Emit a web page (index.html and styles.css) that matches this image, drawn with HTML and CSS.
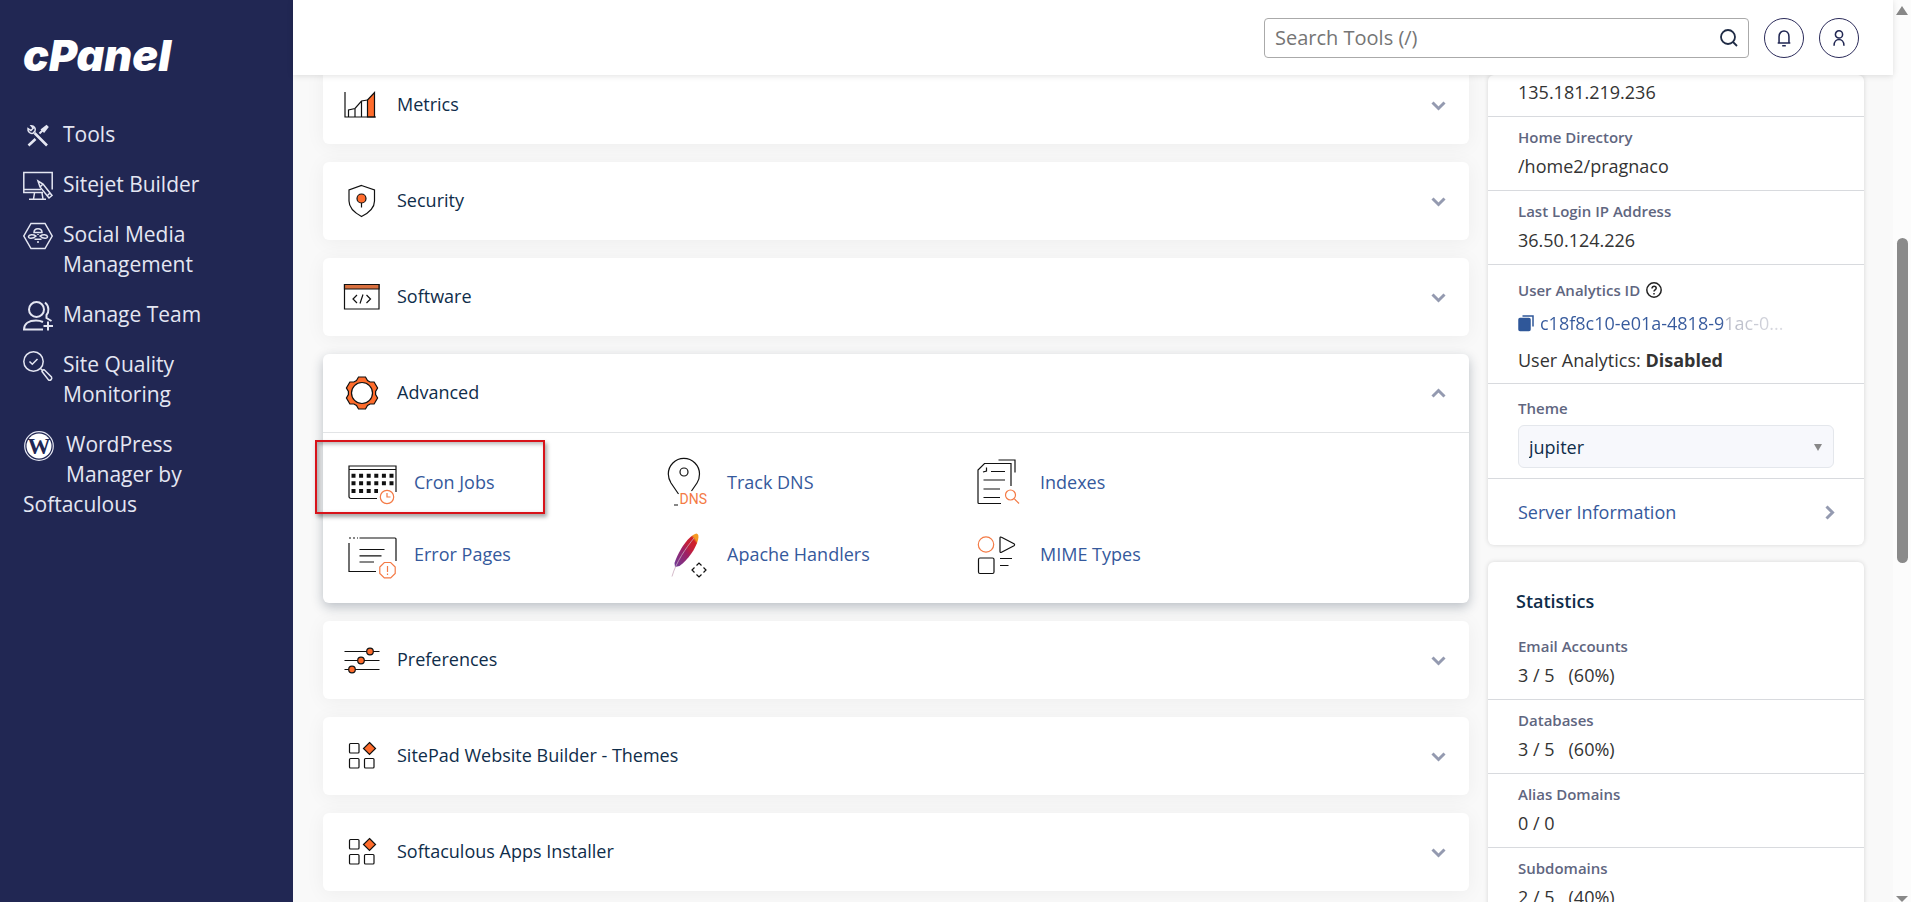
FILE: index.html
```
<!DOCTYPE html>
<html lang="en">
<head>
  <meta charset="UTF-8" />
  <meta name="viewport" content="width=device-width, initial-scale=1.0" />
  <title>cPanel - Tools</title>
  <link rel="stylesheet" href="styles.css">
</head>
<body>
  <nav class="sidebar">
    <a href="#" class="logo">cPanel</a>
    <ul class="nav-list">
      <li>
        <a href="#" class="nav-link">
          <svg class="nav-icon" viewBox="0 0 30 30">
            <path d="M5.5 24.500l7-6.500M11.500 12l12.500 12.500" stroke-width="2.600" />
            <path d="M5 7.500c-.5 3 2 5.500 5 4.800l2-2.200c1-2.800-.8-5.300-3.800-5.300l2 2.500-2.300 2.200z" stroke-width="1.500" />
            <path d="M16.500 12.500l3-3" stroke-width="2" />
            <path d="M19 8.500l4.500-3.500 1 1-3.500 4.500z" fill="#e4e6f2" stroke-width="2" />
          </svg>
          <span>Tools</span>
        </a>
      </li>
      <li>
        <a href="#" class="nav-link">
          <svg class="nav-icon" viewBox="0 0 30 30">
            <path d="M20 21.500H.8V1.500h28.400v17M1 18.500h17M11.500 22l-1 6M19 22l1 6M6 28.300h17" />
            <path d="M15 10l2 6 9 11 3-2.500-9-11.500zM17 16l3-3M24 25l3-3" />
          </svg>
          <span>Sitejet Builder</span>
        </a>
      </li>
      <li>
        <a href="#" class="nav-link">
          <svg class="nav-icon" viewBox="0 0 30 30">
            <path d="M8 2.500h14l7.200 12.500L22 27.500H8L.8 15z" />
            <path d="M11 11.500c0-5 8-5 8 0zM13 15c-3-2-7-1.500-7.500.5s4 3 7.500-.5zM17 15c3-2 7-1.500 7.500.5s-4 3-7.500-.5zM11.500 18.200h7M14 21h2M15 13v1" />
          </svg>
          <span>Social Media Management</span>
        </a>
      </li>
      <li>
        <a href="#" class="nav-link">
          <svg class="nav-icon" viewBox="0 0 30 30">
            <g stroke-width="2">
              <circle cx="13.500" cy="8.500" r="7.500" />
              <path d="M22 1.500c4.500 3.500 4 10 1.500 12.500v3l5 3M20 28.500H1c0-6 5-9 12-9 3 0 5 .5 7 1.500M25 20.500v9M20.500 25H30" />
            </g>
          </svg>
          <span>Manage Team</span>
        </a>
      </li>
      <li>
        <a href="#" class="nav-link">
          <svg class="nav-icon" viewBox="0 0 30 30">
            <circle cx="10.500" cy="10.500" r="9.700" />
            <path d="M6.500 10.500l2.800 2.800L14.500 8M17.500 17.500l2 2" />
            <path d="M19 20.500c.5-1.500 1.500-2 2.500-1.500l7 7c1 2-1 4-3 3z" />
          </svg>
          <span>Site Quality Monitoring</span>
        </a>
      </li>
      <li>
        <a href="#" class="nav-link nav-link-wp">
          <svg class="nav-icon" viewBox="0 0 30 30">
            <circle cx="15" cy="15" r="14.300" stroke-width="1.200" />
            <circle cx="15" cy="15" r="12.500" fill="#fff" stroke="none" />
            <text class="wp-letter" x="15" y="23" text-anchor="middle">W</text>
          </svg>
          WordPress Manager by Softaculous
        </a>
      </li>
    </ul>
  </nav>

  <div class="main">
    <header class="header">
      <form class="search">
        <input type="search" class="search-input" placeholder="Search Tools (/)" aria-label="Search Tools" />
        <svg class="search-icon" viewBox="0 0 20 20">
          <circle cx="9" cy="9" r="7" />
          <path d="M14 14l4 4" />
        </svg>
      </form>
      <button class="round-button" aria-label="Notifications">
        <svg viewBox="0 0 20 20">
          <path d="M3 15.500h14M4.500 15.500V8.500C4.500 0 15.500 0 15.500 8.500v7M8 18.500h4" />
        </svg>
      </button>
      <button class="round-button" aria-label="User menu">
        <svg viewBox="0 0 20 20">
          <circle cx="10" cy="6" r="4" />
          <path d="M4.500 18.500c0-9 11-9 11 0" />
        </svg>
      </button>
    </header>

    <div class="content">
      <div class="tools">
        <section class="card">
          <button class="card-header">
            <svg class="card-icon" viewBox="0 0 36 36">
              <path d="M24.500 13l7-7.500V30h-7z" fill="#ff6c2c" />
              <path d="M2 5v25h31M5.500 30v-7l6.500-1.500 6.500-7.500 6-1M12 21.500V30M18.500 14v16" />
            </svg>
            <span>Metrics</span>
            <svg class="chevron" viewBox="0 0 15 9"><path d="M1.500 1.500l6 6 6-6" /></svg>
          </button>
        </section>

        <section class="card">
          <button class="card-header">
            <svg class="card-icon" viewBox="0 0 36 36">
              <path d="M18.500 2.500L31.500 7v11c0 7-6 12-13 15.500C12 30 6 25 6 18V7z" />
              <circle cx="18.500" cy="15.500" r="4.500" fill="#ff6c2c" />
              <path d="M18.500 20v4.500" />
            </svg>
            <span>Security</span>
            <svg class="chevron" viewBox="0 0 15 9"><path d="M1.500 1.500l6 6 6-6" /></svg>
          </button>
        </section>

        <section class="card">
          <button class="card-header">
            <svg class="card-icon" viewBox="0 0 36 36">
              <path d="M1.500 5.500h34.500v24.500H1.500z" />
              <path d="M1.500 5.500h34.500v4.500H1.500z" fill="#d9703f" />
              <path d="M14 16l-4 4 4 4M20 15.500l-3 9M23.500 16l4 4-4 4" />
            </svg>
            <span>Software</span>
            <svg class="chevron" viewBox="0 0 15 9"><path d="M1.500 1.500l6 6 6-6" /></svg>
          </button>
        </section>

        <section class="card card-open">
          <button class="card-header">
            <svg class="card-icon" viewBox="0 0 36 36">
              <path d="M13.500 5.500l2-3.500h7l2 3.500 2.600 1.500h4l3.500 6-2 3.500v3l2 3.500-3.500 6h-4l-2.600 1.500-2 3.500h-7l-2-3.500-2.600-1.500h-4l-3.500-6 2-3.500v-3l-2-3.500 3.500-6h4z" fill="#ff6c2c" />
              <circle cx="19" cy="18" r="10.500" fill="#fff" />
            </svg>
            <span>Advanced</span>
            <svg class="chevron" viewBox="0 0 15 9"><path d="M1.500 7.500l6-6 6 6" /></svg>
          </button>
          <div class="tool-grid">
            <a href="#" class="tool highlighted">
              <svg class="tool-icon" viewBox="0 0 50 48">
                <path d="M30 40.500H4a2 2 0 0 1-2-2V8h47v26M2 11.500h47" />
                <path class="days" d="M4.500 17.800H48M4.500 25.300H48M4.500 33H31" />
                <circle class="accent" cx="40" cy="39" r="6.700" />
                <path class="accent" d="M40 35v4h3.500" />
              </svg>
              <span>Cron Jobs</span>
            </a>
            <a href="#" class="tool">
              <svg class="tool-icon" viewBox="0 0 50 48">
                <path d="M18.500 36L11 25C9 21.500 8.300 19 8.300 16a15.500 15.500 0 0 1 31.200 0c0 3-.5 6-2.500 9l-5.500 8M14 47h4" />
                <circle cx="24" cy="14" r="4" />
                <text class="dns" x="19.500" y="46">DNS</text>
              </svg>
              <span>Track DNS</span>
            </a>
            <a href="#" class="tool">
              <svg class="tool-icon" viewBox="0 0 50 48">
                <path d="M28 45.500H6a1 1 0 0 1-1-1V12l6.500-6.500H38V28M25.500 2H42v12.500M13.500 9.500V13l-3.500 1M18 13.500h14M10.500 22H32M10.500 31H27M10.500 39.500H27" />
                <circle class="accent" cx="37.500" cy="37" r="5" />
                <path class="accent" d="M41.500 41l4.500 4.500" />
              </svg>
              <span>Indexes</span>
            </a>
            <a href="#" class="tool">
              <svg class="tool-icon" viewBox="0 0 50 48">
                <path d="M12.500 8H48a1 1 0 0 1 1 1v22M2 13v28.500h27M12.500 19.500h25M12.500 25.800h22M12.500 32H27" />
                <path d="M2 8h9" stroke-dasharray="2 2" />
                <path class="accent" d="M37.300 32.500h6.400l4.500 4.500v6.400l-4.500 4.500h-6.400l-4.500-4.500V37zM40.500 36v6M40.500 43.500v1.500" />
              </svg>
              <span>Error Pages</span>
            </a>
            <a href="#" class="tool">
              <svg class="tool-icon" viewBox="0 0 50 48">
                <defs>
                  <linearGradient id="feather" x1="1" y1="0" x2="0" y2="1">
                    <stop offset="0.140" stop-color="#f59a23" />
                    <stop offset="0.200" stop-color="#d22128" />
                    <stop offset="0.400" stop-color="#c21f3c" />
                    <stop offset="0.550" stop-color="#9e2064" />
                    <stop offset="1" stop-color="#6d3c9a" />
                  </linearGradient>
                </defs>
                <path d="M36.500 3.500C29 5 19 20 14.500 33l.5 4 4.500-1C28 30 36 18 38 10c1-4 .5-6-1.500-6.500z" fill="url(#feather)" stroke="none" />
                <path d="M34 8C26 18 16 32 12 46.500" stroke="#c9a9bd" stroke-width="0.800" />
                <path d="M36.500 35.500l2.500-2.500 2.500 2.500M36.500 44.500l2.500 2.500 2.500-2.500M34.500 37.500L32 40l2.500 2.500M43.500 37.500L46 40l-2.500 2.500" />
              </svg>
              <span>Apache Handlers</span>
            </a>
            <a href="#" class="tool">
              <svg class="tool-icon" viewBox="0 0 50 48">
                <circle class="accent" cx="13" cy="14.500" r="7.700" />
                <path d="M27 8v13.500c0 1 .8 1.200 1.500.8l12.500-6.500c.8-.5.8-1.500 0-2L28.500 7.200c-.7-.4-1.500-.2-1.500.8zM27 28.500h12M27 35.500h8.500" />
                <rect x="5.500" y="28" width="15.500" height="15.500" rx="1.500" />
              </svg>
              <span>MIME Types</span>
            </a>
          </div>
        </section>

        <section class="card">
          <button class="card-header">
            <svg class="card-icon" viewBox="0 0 36 36">
              <path d="M1.500 9.500h35M1.500 18.500h35M1.500 27.500h35" />
              <g fill="#ff6c2c">
                <circle cx="27" cy="9.500" r="3.300" />
                <circle cx="18" cy="18.500" r="3.300" />
                <circle cx="9" cy="27.500" r="3.300" />
              </g>
            </svg>
            <span>Preferences</span>
            <svg class="chevron" viewBox="0 0 15 9"><path d="M1.500 1.500l6 6 6-6" /></svg>
          </button>
        </section>

        <section class="card">
          <button class="card-header">
            <svg class="card-icon" viewBox="0 0 36 36">
              <rect x="6.500" y="5.500" width="9.500" height="9.500" rx="1" />
              <rect x="6.500" y="20.500" width="9.500" height="9.500" rx="1" />
              <rect x="21.500" y="20.500" width="9.500" height="9.500" rx="1" />
              <path d="M26.500 4.500l6 6-6 6-6-6z" fill="#ff6c2c" />
            </svg>
            <span>SitePad Website Builder - Themes</span>
            <svg class="chevron" viewBox="0 0 15 9"><path d="M1.500 1.500l6 6 6-6" /></svg>
          </button>
        </section>

        <section class="card">
          <button class="card-header">
            <svg class="card-icon" viewBox="0 0 36 36">
              <rect x="6.500" y="5.500" width="9.500" height="9.500" rx="1" />
              <rect x="6.500" y="20.500" width="9.500" height="9.500" rx="1" />
              <rect x="21.500" y="20.500" width="9.500" height="9.500" rx="1" />
              <path d="M26.500 4.500l6 6-6 6-6-6z" fill="#ff6c2c" />
            </svg>
            <span>Softaculous Apps Installer</span>
            <svg class="chevron" viewBox="0 0 15 9"><path d="M1.500 1.500l6 6 6-6" /></svg>
          </button>
        </section>
      </div>

      <aside class="info">
        <div class="panel panel-general">
          <div class="row">
            <p class="value">135.181.219.236</p>
          </div>
          <div class="row">
            <p class="label">Home Directory</p>
            <p class="value">/home2/pragnaco</p>
          </div>
          <div class="row">
            <p class="label">Last Login IP Address</p>
            <p class="value">36.50.124.226</p>
          </div>
          <div class="row row-analytics">
            <p class="label">
              User Analytics ID
              <svg class="help-icon" viewBox="0 0 16 16">
                <circle cx="8" cy="8" r="7.200" />
                <path d="M6 6.500c0-3 4.200-2.700 4.200-.2 0 1.500-2.200 1.500-2.200 3.200M8 11v1.500" />
              </svg>
            </p>
            <a href="#" class="value analytics-id">
              <svg class="copy-icon" viewBox="0 0 16 16">
                <path d="M4.500 1h10.500v10.500" />
                <rect x="1" y="3.500" width="11" height="12" rx="1" fill="#2f5799" />
              </svg>
              <span class="fade-text">c18f8c10-e01a-4818-91ac-0...</span>
            </a>
            <p class="value">User Analytics: <strong>Disabled</strong></p>
          </div>
          <div class="row row-theme">
            <label class="label" for="theme">Theme</label>
            <div class="select-wrap">
              <select id="theme" class="theme-select">
                <option>jupiter</option>
              </select>
            </div>
          </div>
          <a href="#" class="row row-server">
            <span>Server Information</span>
            <svg class="chevron-right" viewBox="0 0 9 15"><path d="M1.500 1.500l6 6-6 6" /></svg>
          </a>
        </div>

        <div class="panel">
          <h2 class="panel-title">Statistics</h2>
          <div class="row">
            <p class="label">Email Accounts</p>
            <p class="value">3 / 5 &nbsp; (60%)</p>
          </div>
          <div class="row">
            <p class="label">Databases</p>
            <p class="value">3 / 5 &nbsp; (60%)</p>
          </div>
          <div class="row">
            <p class="label">Alias Domains</p>
            <p class="value">0 / 0</p>
          </div>
          <div class="row">
            <p class="label">Subdomains</p>
            <p class="value">2 / 5 &nbsp; (40%)</p>
          </div>
        </div>
      </aside>
    </div>
  </div>

  <div class="scrollbar" aria-hidden="true">
    <span class="arrow-up"></span>
    <span class="thumb"></span>
    <span class="arrow-down"></span>
  </div>
</body>
</html>
```
FILE: styles.css
```
* {
  box-sizing: border-box;
}
body {
  margin: 0;
  height: 100vh;
  display: flex;
  overflow: hidden;
  background-color: #f9f9f9;
  color: #333;
  font-family: "Open Sans", "Noto Sans", sans-serif;
  font-size: 18px;
  line-height: 30px;
}
p,
h2,
ul {
  margin: 0;
  padding: 0;
}
a {
  color: #35599c;
  text-decoration: none;
}
button {
  font: inherit;
  color: inherit;
  cursor: pointer;
}
svg {
  flex: none;
  fill: none;
  stroke: #111;
  stroke-width: 1.2;
  overflow: visible;
}

/* Sidebar */
.sidebar {
  flex: none;
  width: 293px;
  padding: 30px 30px 0 23px;
  background-color: #212753;
}
.logo {
  display: block;
  color: #fff;
  font-family: Inter, sans-serif;
  font-size: 43px;
  font-weight: 900;
  font-style: italic;
  line-height: 50px;
}
.nav-list {
  list-style: none;
  margin-top: 29px;
}
.nav-link {
  display: flex;
  gap: 10px;
  padding: 10px 0;
  color: #e4e6f2;
  font-size: 21px;
}
.nav-link-wp {
  display: block;
}
.nav-icon {
  width: 30px;
  height: 30px;
  margin: 2px 0 -2px;
  stroke: #e4e6f2;
  stroke-width: 1.5;
}
.nav-link-wp .nav-icon {
  float: left;
  margin: 2px 12px 26px 1px;
}
.wp-letter {
  fill: #212753;
  stroke: none;
  font-family: "Liberation Serif", serif;
  font-size: 23px;
  font-weight: 700;
}

/* Top bar */
.main {
  flex: 1;
  min-width: 0;
}
.header {
  position: relative;
  z-index: 2;
  display: flex;
  justify-content: flex-end;
  align-items: center;
  gap: 15px;
  height: 75px;
  padding-right: 34px;
  background-color: #fff;
  box-shadow: 0 1px 6px rgba(0, 0, 0, 0.12);
}
.search {
  position: relative;
  width: 485px;
}
.search-input {
  display: block;
  width: 100%;
  height: 40px;
  padding: 0 45px 0 10px;
  border: 1px solid #aaa;
  border-radius: 4px;
  font: inherit;
  font-size: 20px;
}
.search-input::placeholder {
  color: #757575;
}
.search-icon {
  position: absolute;
  right: 10px;
  top: 10px;
  width: 20px;
  height: 20px;
  stroke: #1f2b45;
  stroke-width: 1.8;
}
.round-button {
  display: flex;
  align-items: center;
  justify-content: center;
  width: 40px;
  height: 40px;
  padding: 0;
  border: 1px solid #2b2b5a;
  border-radius: 50%;
  background: none;
}
.round-button svg {
  width: 18px;
  height: 18px;
  stroke: #212753;
  stroke-width: 1.7;
}

/* Content */
.content {
  display: flex;
  align-items: flex-start;
  gap: 19px;
  padding: 0 29px 0 30px;
}
.tools {
  flex: 1;
  display: flex;
  flex-direction: column;
  gap: 18px;
  margin-top: -9px;
}
.card {
  background-color: #fff;
  border-radius: 6px;
  box-shadow: 0 2px 20px rgba(0, 0, 0, 0.05);
}
.card-open {
  position: relative;
  box-shadow: 0 4px 12px rgba(20, 40, 60, 0.28);
}
.card-header {
  display: flex;
  align-items: center;
  gap: 18px;
  width: 100%;
  height: 78px;
  padding: 0 23px 0 20px;
  border: none;
  background: none;
  color: #0f2d4a;
  text-align: left;
}
.card-header span {
  flex: 1;
  padding-bottom: 3px;
}
.card-icon {
  width: 36px;
  height: 36px;
}
.chevron {
  width: 15px;
  height: 9px;
}
.chevron,
.chevron-right {
  stroke: #949ab0;
  stroke-width: 3;
}
.tool-grid {
  display: grid;
  grid-template-columns: repeat(auto-fill, 313px);
  padding: 13px 24px;
  border-top: 1px solid #e2e4e6;
}
.tool {
  position: relative;
  display: flex;
  align-items: center;
  gap: 17px;
  height: 72px;
}
.tool-icon {
  width: 50px;
  height: 48px;
}
.tool-icon .accent {
  stroke: #f47a45;
}
.tool-icon .days {
  stroke-width: 4;
  stroke-dasharray: 4 3.6;
}
.tool-icon .dns {
  fill: #f47a45;
  stroke: none;
  font-family: Roboto, sans-serif;
  font-size: 14px;
}
.highlighted::after {
  content: "";
  position: absolute;
  left: -32px;
  top: -6px;
  width: 226px;
  height: 70px;
  border: 2px solid #d8131a;
  box-shadow: 2px 3px 4px rgba(0, 0, 0, 0.35), inset 2px 2px 4px rgba(0, 0, 0, 0.3);
}

/* Right column */
.info {
  flex: none;
  width: 376px;
}
.panel {
  margin-bottom: 17px;
  background-color: #fff;
  border-radius: 6px;
  box-shadow: 0 0 5px rgba(0, 0, 0, 0.14);
}
.row {
  padding: 6px 30px 9px;
}
.row + .row {
  border-top: 1px solid #d8dade;
}
.panel-general .row:first-child {
  padding-top: 2px;
}
.label {
  display: flex;
  align-items: center;
  gap: 6px;
  color: #5f6680;
  font-size: 15px;
  font-weight: 600;
  line-height: 28px;
}
.help-icon {
  width: 16px;
  height: 16px;
  stroke: #222;
  stroke-width: 1.5;
}
.row-analytics {
  padding: 11px 30px 8px;
}
.analytics-id {
  display: flex;
  align-items: center;
  gap: 6px;
  margin: 4px 0 7px;
}
.copy-icon {
  width: 16px;
  height: 16px;
  stroke: #2f5799;
  stroke-width: 1.5;
}
.fade-text {
  background: linear-gradient(to right, #35599c 75%, #b4b7c4 76%, #dcdde3);
  -webkit-background-clip: text;
  background-clip: text;
  color: transparent;
}
.row-theme {
  padding: 10px 30px;
}
.select-wrap {
  position: relative;
  margin-top: 3px;
}
.select-wrap::after {
  content: "";
  position: absolute;
  right: 12px;
  top: 19px;
  border: 4px solid transparent;
  border-top: 7px solid #888;
  border-bottom: none;
}
.theme-select {
  display: block;
  width: 100%;
  height: 43px;
  padding: 0 10px;
  appearance: none;
  border: 1px solid #e4e7ec;
  border-radius: 6px;
  background-color: #f7f8fc;
  color: #0f2d4a;
  font: inherit;
}
.row-server {
  display: flex;
  align-items: center;
  justify-content: space-between;
  padding: 18px 30px;
}
.chevron-right {
  width: 9px;
  height: 15px;
}
.panel-title {
  padding: 24px 28px 10px;
  color: #0f2d4a;
  font-size: 18px;
  font-weight: 600;
}

/* Window scrollbar */
.scrollbar {
  flex: none;
  display: flex;
  flex-direction: column;
  align-items: center;
  width: 18px;
  height: 100vh;
  background-color: #fcfcfc;
}
.arrow-up,
.arrow-down {
  border: 6px solid transparent;
}
.arrow-up {
  margin-top: 6px;
  border-top: none;
  border-bottom: 9px solid #888;
}
.thumb {
  width: 11px;
  height: 36%;
  margin: 223px 0 auto;
  border-radius: 6px;
  background-color: #8a8a8a;
}
.arrow-down {
  border-bottom: none;
  border-top: 6px solid #888;
}
```
